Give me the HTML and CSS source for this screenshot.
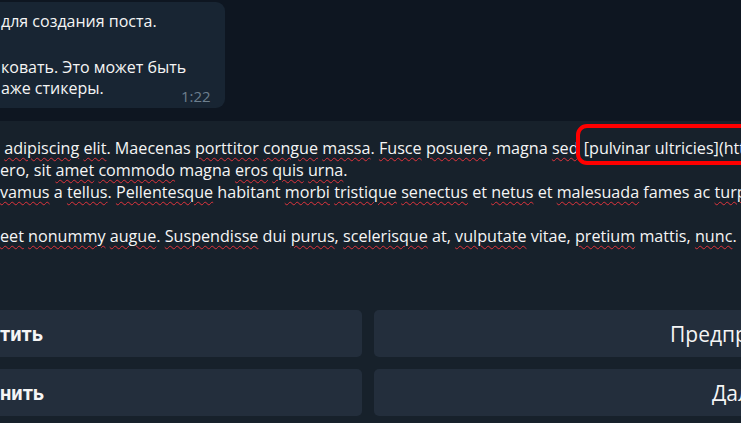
FILE: index.html
```html
<!DOCTYPE html>
<html lang="ru">
<head>
<meta charset="utf-8">
<link rel="stylesheet" href="styles.css">
</head>
<body>
<div class="chat">
  <div class="bubble">
    <div class="bline first">для создания поста.</div>
    <div class="bline gap">ковать. Это может быть</div>
    <div class="bline">аже стикеры.</div>
    <span class="time">1:22</span>
  </div>
</div>
<div class="panel">
  <div class="editor">
    <div class="line"> <span class="sp">adipiscing</span> <span class="sp">elit</span>. Maecenas <span class="sp">porttitor</span> <span class="sp">congue</span> <span class="sp">massa</span>. <span class="sp">Fusce</span> <span class="sp">posuere</span>, magna <span class="sp">sed</span> <span class="mark">[pulvinar ultricies](https://example.com)</span></div>
    <div class="line">ero, sit <span class="sp">amet</span> <span class="sp">commodo</span> magna <span class="sp">eros</span> <span class="sp">quis</span> <span class="sp">urna</span>.</div>
    <div class="line"><span class="sp">vamus</span> a <span class="sp">tellus</span>. <span class="sp">Pellentesque</span> habitant <span class="sp">morbi</span> <span class="sp">tristique</span> <span class="sp">senectus</span> et <span class="sp">netus</span> et <span class="sp">malesuada</span> fames ac <span class="sp">turpis</span> egestas.</div>
    <div class="line">&nbsp;</div>
    <div class="line"><span class="sp">eet</span> <span class="sp">nonummy</span> <span class="sp">augue</span>. <span class="sp">Suspendisse</span> dui <span class="sp">purus</span>, <span class="sp">scelerisque</span> at, <span class="sp">vulputate</span> vitae, <span class="sp">pretium</span> mattis, <span class="sp">nunc</span>.</div>
  </div>
  <div class="buttons">
    <div class="btn left"><span>тить</span></div>
    <div class="btn right"><span>Предпросмотр</span></div>
    <div class="btn left"><span>нить</span></div>
    <div class="btn right two"><span>Далее</span></div>
  </div>
</div>
</body>
</html>
```
FILE: styles.css
```css
html, body {
  margin: 0;
  padding: 0;
}
body {
  width: 741px;
  height: 423px;
  overflow: hidden;
  background: #17212b;
  font-family: "Open Sans", "Noto Sans", sans-serif;
  color: #f5f5f5;
}
.chat {
  height: 121px;
  background: #0e1621;
  padding-top: 2px;
  box-sizing: border-box;
}
.bubble {
  position: relative;
  width: 225px;
  height: 106px;
  padding-left: 1px;
  box-sizing: border-box;
  background: #182533;
  border-radius: 0 9px 9px 0;
  font-size: 16px;
}
.bline {
  white-space: nowrap;
  line-height: 21px;
}
.bline.first {
  padding-top: 9px;
}
.bline.gap {
  margin-top: 25px;
}
.time {
  position: absolute;
  left: 181px;
  top: 84px;
  font-size: 15px;
  color: #6d7f8e;
}
.panel {
  overflow: hidden;
  height: 302px;
}
.editor {
  padding-top: 16px;
  font-size: 16.15px;
  line-height: 22px;
}
.line {
  white-space: pre;
  height: 22px;
}
.sp {
  text-decoration: underline wavy #e0343c;
  text-decoration-thickness: 1px;
  text-underline-offset: 3px;
}
.mark {
  position: relative;
  margin-left: 1px;
}
.mark::before {
  content: "";
  position: absolute;
  left: -8px;
  top: -13px;
  width: 400px;
  height: 33px;
  border: 4px solid #ff0000;
  border-radius: 11px;
}
.buttons {
  display: grid;
  grid-template-columns: 362px 520px;
  grid-auto-rows: 47px;
  column-gap: 12px;
  row-gap: 12px;
  margin-top: 63px;
}
.btn {
  background: #232e3c;
  border-radius: 5px;
  display: flex;
  align-items: center;
  font-size: 21px;
  white-space: nowrap;
  overflow: hidden;
}
.btn.left {
  font-family: Roboto, "Liberation Sans", sans-serif;
  font-weight: bold;
  font-size: 20px;
  border-radius: 0 5px 5px 0;
}
.btn.right {
  padding-left: 296px;
}
.btn.right.two {
  padding-left: 338px;
}
```
